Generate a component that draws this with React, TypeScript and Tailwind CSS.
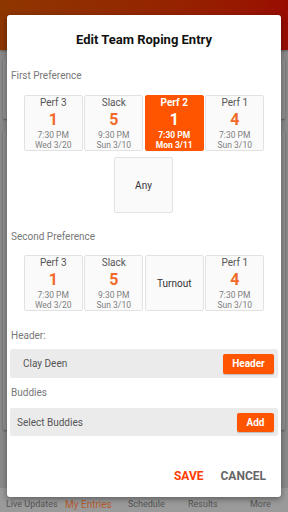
import React from "react";

type Slot = { label: string; num: string; time: string; date: string; selected?: boolean };

const row1: Slot[] = [
  { label: "Perf 3", num: "1", time: "7:30 PM", date: "Wed 3/20" },
  { label: "Slack", num: "5", time: "9:30 PM", date: "Sun 3/10" },
  { label: "Perf 2", num: "1", time: "7:30 PM", date: "Mon 3/11", selected: true },
  { label: "Perf 1", num: "4", time: "7:30 PM", date: "Sun 3/10" },
];

function Card({ s }: { s: Slot }) {
  if (s.selected) {
    return (
      <div className="w-[59px] h-[56px] rounded-[2px] bg-[#ff5500] border border-[#ff5500] flex flex-col items-center pt-[1px] text-white">
        <div className="text-[10px] leading-[12px] font-bold">{s.label}</div>
        <div className="text-[16px] leading-[18px] font-bold mt-[1.5px]">{s.num}</div>
        <div className="text-[8.5px] leading-[10px] font-bold mt-[1px]">{s.time}</div>
        <div className="text-[8.5px] leading-[10px] font-bold">{s.date}</div>
      </div>
    );
  }
  return (
    <div className="w-[59px] h-[56px] rounded-[2px] bg-[#fafafa] border border-[#e2e2e2] flex flex-col items-center pt-[1px]">
      <div className="text-[10px] leading-[12px] text-[#555]">{s.label}</div>
      <div className="text-[16px] leading-[18px] font-bold text-[#f26a2a] mt-[1.5px]">{s.num}</div>
      <div className="text-[8.5px] leading-[10px] text-[#808080] mt-[1px]">{s.time}</div>
      <div className="text-[8.5px] leading-[10px] text-[#808080]">{s.date}</div>
    </div>
  );
}

function PlainCard({ text }: { text: string }) {
  return (
    <div className="w-[59px] h-[56px] rounded-[2px] bg-[#fafafa] border border-[#e2e2e2] flex items-center justify-center text-[10px] text-[#333]">
      {text}
    </div>
  );
}

export default function App() {
  return (
    <div
      className="relative w-[288px] h-[512px] overflow-hidden bg-[#8a8a8a]"
      style={{ fontFamily: "Roboto, 'Liberation Sans', Arial, sans-serif" }}
    >
      {/* background app (dimmed) */}
      <div className="h-[50px] bg-gradient-to-r from-[#8e3600] to-[#990c00] shadow-[0_1px_2px_rgba(0,0,0,0.3)]" />
      <div className="flex flex-col gap-[11px] px-[3px] pt-[8px]">
        <div className="h-[61px] rounded-[2px] bg-[#8f8f8f] shadow-[0_1px_2px_rgba(0,0,0,0.35)]" />
        <div className="h-[300px] rounded-[2px] bg-[#8f8f8f] shadow-[0_1px_2px_rgba(0,0,0,0.35)]" />
      </div>
      <div className="absolute bottom-0 left-0 right-0 h-[24px] bg-[#9a9a9a] text-[9px] text-[#555]">
        <span className="absolute left-[6px] top-[10px]">Live Updates</span>
        <span className="absolute left-[65px] top-[9px] text-[10px] text-[#b45a2e]">My Entries</span>
        <span className="absolute left-[128px] top-[10px]">Schedule</span>
        <span className="absolute left-[188px] top-[10px]">Results</span>
        <span className="absolute left-[250px] top-[10px]">More</span>
      </div>

      {/* modal */}
      <div className="absolute left-[7px] top-[15px] w-[274px] h-[482px] bg-white rounded-[3px] shadow-[0_2px_6px_rgba(0,0,0,0.4)] px-[3px] flex flex-col">
        <div className="pt-[17px] text-center text-[13px] leading-[16px] font-bold text-[#111]">
          Edit Team Roping Entry
        </div>

        <div className="mt-[22px] pl-[1px] text-[10px] leading-[12px] text-[#777]">First Preference</div>
        <div className="mt-[13px] flex justify-center gap-[1.5px]">
          {row1.map((s, i) => (
            <Card key={i} s={s} />
          ))}
        </div>
        <div className="mt-[6px] flex justify-center">
          <div className="w-[60px]">
            <PlainCard text="Any" />
          </div>
        </div>

        <div className="mt-[18px] pl-[1px] text-[10px] leading-[12px] text-[#777]">Second Preference</div>
        <div className="mt-[12px] flex justify-center gap-[1.5px]">
          <Card s={row1[0]} />
          <Card s={row1[1]} />
          <PlainCard text="Turnout" />
          <Card s={row1[3]} />
        </div>

        <div className="mt-[19px] pl-[1px] text-[10px] leading-[12px] text-[#777]">Header:</div>
        <div className="mt-[7px] h-[29px] rounded-[2px] bg-[#ebebeb] flex items-center justify-between pl-[13px] pr-[4px]">
          <span className="text-[10px] text-[#555]">Clay Deen</span>
          <span className="w-[51px] h-[20px] rounded-[2px] bg-[#ff5500] text-white text-[10px] font-bold flex items-center justify-center shadow-[0_1px_1px_rgba(0,0,0,0.2)]">
            Header
          </span>
        </div>

        <div className="mt-[9px] pl-[1px] text-[10px] leading-[12px] text-[#777]">Buddies</div>
        <div className="mt-[9px] h-[28px] rounded-[2px] bg-[#ebebeb] flex items-center justify-between pl-[7px] pr-[4px]">
          <span className="text-[10px] text-[#555]">Select Buddies</span>
          <span className="w-[37px] h-[19px] rounded-[2px] bg-[#ff5500] text-white text-[10px] font-bold flex items-center justify-center shadow-[0_1px_1px_rgba(0,0,0,0.2)]">
            Add
          </span>
        </div>

        <div className="mt-[33px] flex justify-end pr-[12px] gap-[17px] text-[12px] leading-[15px] font-bold">
          <span className="text-[#ff3d00]">SAVE</span>
          <span className="text-[#666]">CANCEL</span>
        </div>
      </div>
    </div>
  );
}
